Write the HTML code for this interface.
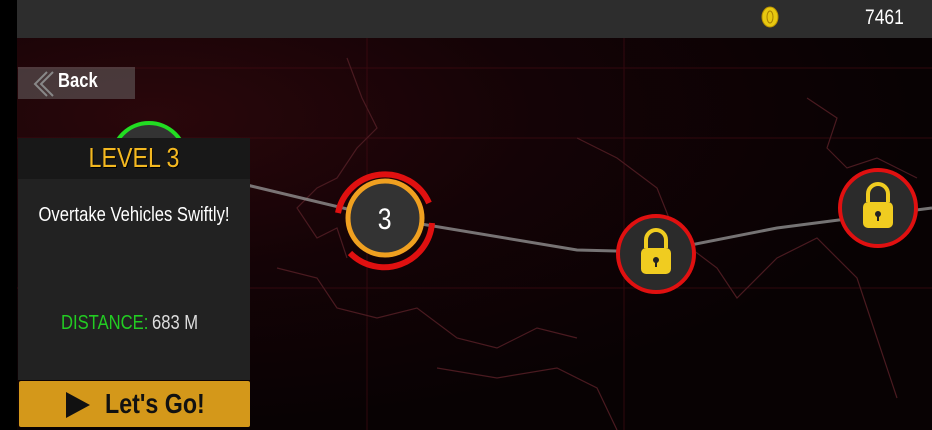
<!DOCTYPE html>
<html><head><meta charset="utf-8"><style>
*{margin:0;padding:0;box-sizing:border-box}
body{width:932px;height:430px;overflow:hidden;background:#000;font-family:"Liberation Sans",sans-serif;position:relative}
.map{position:absolute;left:17px;top:38px;width:915px;height:392px;background:radial-gradient(ellipse at 15% 20%,#2a070b 0%,#140306 35%,#080203 70%),#080203}
.top{position:absolute;left:17px;top:0;width:915px;height:38px;background:#2d2d2d}
.t{position:absolute;transform:scaleX(.83);transform-origin:left top;white-space:nowrap}
.c{position:absolute;transform:scaleX(.83);transform-origin:center top;white-space:nowrap;text-align:center}
</style></head><body>
<div class="map">
<svg width="915" height="392" style="position:absolute;left:0;top:0">
<g stroke="#4a0c14" stroke-width="1" opacity=".6">
<line x1="0" y1="30" x2="915" y2="30"/><line x1="0" y1="100" x2="915" y2="100"/><line x1="0" y1="250" x2="915" y2="250"/>
<line x1="350" y1="0" x2="350" y2="392"/><line x1="607" y1="0" x2="607" y2="392"/>
</g>
<g fill="none" stroke="#4a1a20" stroke-width="1.2">
<path d="M330 20 L345 60 L360 90 L340 110 L320 140 L300 150 L280 170 L300 200 L320 190 L330 220"/>
<path d="M260 230 L300 240 L320 270 L360 280 L400 270 L440 300 L480 310 L520 290 L560 300"/>
<path d="M420 330 L480 340 L540 330 L580 350 L600 392"/>
<path d="M560 100 L600 120 L640 150 L660 200 L700 230 L720 260 L760 220 L800 200 L840 240 L860 300 L880 360"/>
<path d="M790 60 L820 80 L810 110 L830 130 L860 120 L900 140"/>
</g>
<polyline points="230,147 368,180 560,212 638,214 760,190 915,170" fill="none" stroke="#999" stroke-width="3" opacity=".75"/>
</svg>
</div>
<div class="top"></div>
<svg style="position:absolute;left:760px;top:5px" width="20" height="24"><ellipse cx="10" cy="12" rx="8" ry="10" fill="#e8c810" stroke="#b89000"/><ellipse cx="10" cy="12" rx="3" ry="6" fill="none" stroke="#a88000"/></svg>
<div class="t" style="left:865px;top:6px;color:#fff;font-size:21px">7461</div>
<div style="position:absolute;left:18px;top:67px;width:117px;height:32px;background:rgba(120,120,120,.45)"></div>
<svg style="position:absolute;left:33px;top:70px" width="24" height="28"><path d="M20 2 L8 14 L20 26 M14 2 L2 14 L14 26" fill="none" stroke="#888" stroke-width="2"/></svg>
<div class="t" style="left:58px;top:70px;color:#fff;font-size:20px;font-weight:bold">Back</div>
<svg style="position:absolute;left:100px;top:100px" width="100" height="50"><circle cx="49" cy="60" r="37" fill="#333" stroke="#22dd22" stroke-width="4"/></svg>
<div style="position:absolute;left:18px;top:138px;width:232px;height:242px;background:#222"></div>
<div style="position:absolute;left:18px;top:138px;width:232px;height:41px;background:#181818"></div>
<div class="c" style="left:18px;width:232px;top:142px;color:#f4b820;font-size:28px;text-shadow:1px 1px 0 #000">LEVEL 3</div>
<div class="c" style="left:18px;width:232px;top:204px;color:#fff;font-size:20px">Overtake Vehicles Swiftly!</div>
<div class="t" style="left:61px;top:312px;color:#22cc22;font-size:20px">DISTANCE:</div>
<div class="t" style="left:152px;top:312px;color:#ddd;font-size:20px">683 M</div>
<div style="position:absolute;left:19px;top:381px;width:231px;height:46px;background:#d4981a;border-radius:2px"></div>
<svg style="position:absolute;left:64px;top:390px" width="28" height="30"><path d="M2 2 L26 15 L2 28Z" fill="#111"/></svg>
<div class="t" style="left:105px;top:388px;color:#111;font-size:28px;font-weight:bold">Let's Go!</div>
<svg style="position:absolute;left:330px;top:163px" width="110" height="110">
<path d="M8 50 A48 48 0 0 1 99 40" fill="none" stroke="#e01010" stroke-width="6"/>
<path d="M102 60 A48 48 0 0 1 20 90" fill="none" stroke="#e01010" stroke-width="6"/>
<circle cx="55" cy="55" r="37" fill="#333" stroke="#f0a020" stroke-width="5"/>
<text x="55" y="66" text-anchor="middle" fill="#fff" font-size="30" font-family="Liberation Sans,sans-serif" transform="translate(9 0) scale(.83 1)">3</text>
</svg>
<svg style="position:absolute;left:614px;top:212px" width="84" height="84">
<circle cx="42" cy="42" r="38" fill="#2b2b2b" stroke="#e01010" stroke-width="4"/>
<path d="M32 36 V28 A10 10 0 0 1 52 28 V36" fill="none" stroke="#f0cc20" stroke-width="4"/>
<rect x="27" y="36" width="30" height="26" rx="5" fill="#f0cc20"/><circle cx="42" cy="48" r="3" fill="#222"/><rect x="41" y="48" width="2" height="7" fill="#222"/>
</svg>
<svg style="position:absolute;left:836px;top:168px" width="84" height="84">
<circle cx="42" cy="40" r="38" fill="#2b2b2b" stroke="#e01010" stroke-width="4"/>
<path d="M32 34 V26 A10 10 0 0 1 52 26 V34" fill="none" stroke="#f0cc20" stroke-width="4"/>
<rect x="27" y="34" width="30" height="26" rx="5" fill="#f0cc20"/><circle cx="42" cy="46" r="3" fill="#222"/><rect x="41" y="46" width="2" height="7" fill="#222"/>
</svg>
</body></html>
